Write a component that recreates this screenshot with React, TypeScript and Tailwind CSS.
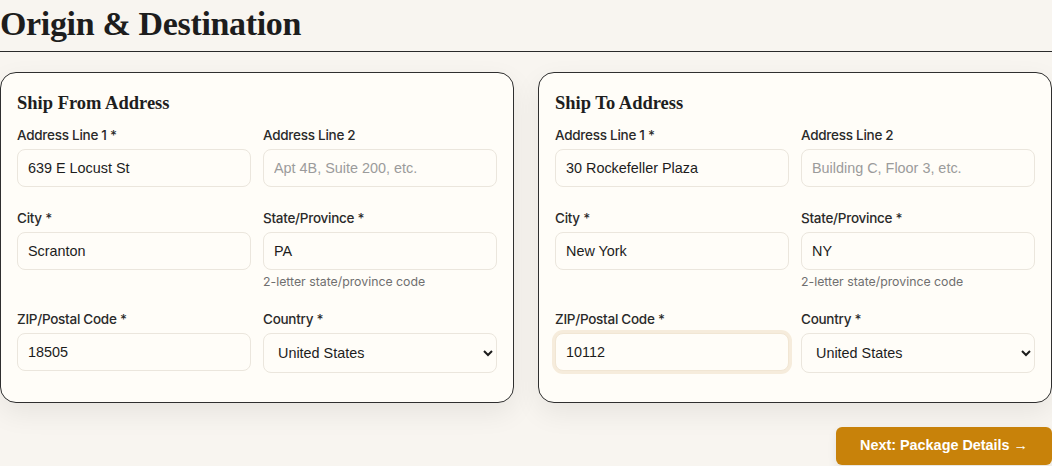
import React from 'react'

interface Address {
  line1: string
  line2: string
  line2Placeholder: string
  city: string
  state: string
  zip: string
  country: string
}

const sans = "font-['Inter','Noto_Sans',sans-serif]"
const serif = "font-['Liberation_Serif','Times_New_Roman',serif]"

const fieldBase =
  "w-full rounded-lg border border-[#ebe6dd] bg-[#fffdf8] px-2.5 font-['Liberation_Sans',Arial,sans-serif] text-[14.4px] text-[#1c1c1c] outline-none placeholder:text-[#9b9b9b]"

function Field({
  label,
  children,
  hint
}: {
  label: string
  children: React.ReactNode
  hint?: string
}) {
  return (
    <div className="flex flex-col">
      <label className={`${sans} mb-1 text-[13.5px] leading-5 font-medium tracking-[-0.02em] text-[#2a2a2a]`}>
        {label}
      </label>
      {children}
      {hint && <p className={`${sans} mt-1 -mb-0.5 text-[12.3px] leading-4 text-[#6f6f6f]`}>{hint}</p>}
    </div>
  )
}

function AddressCard({
  title,
  address,
  focusZip = false
}: {
  title: string
  address: Address
  focusZip?: boolean
}) {
  return (
    <div className="rounded-2xl border border-[#2f2f2f] bg-[#fffdf8] px-4 pt-4 pb-[29px] shadow-[0_10px_28px_rgba(0,0,0,0.07)]">
      <h3 className={`${serif} mb-2 text-[18.5px] leading-7 font-bold text-[#1e1e1e]`}>{title}</h3>
      <div className="grid grid-cols-2 gap-x-3 gap-y-[21px]">
        <Field label="Address Line 1 *">
          <input className={`${fieldBase} h-[38px]`} defaultValue={address.line1} />
        </Field>
        <Field label="Address Line 2">
          <input
            className={`${fieldBase} h-[38px]`}
            defaultValue={address.line2}
            placeholder={address.line2Placeholder}
          />
        </Field>
        <Field label="City *">
          <input className={`${fieldBase} h-[38px]`} defaultValue={address.city} />
        </Field>
        <Field label="State/Province *" hint="2-letter state/province code">
          <input className={`${fieldBase} h-[38px]`} defaultValue={address.state} />
        </Field>
        <Field label="ZIP/Postal Code *">
          <input
            className={`${fieldBase} h-[38px] ${focusZip ? 'border-[#f1e6d4] ring-[3px] ring-[#f6ecdc]' : ''}`}
            defaultValue={address.zip}
          />
        </Field>
        <Field label="Country *">
          <select className={`${fieldBase} h-10`} defaultValue={address.country}>
            <option value="US">United States</option>
            <option value="CA">Canada</option>
            <option value="MX">Mexico</option>
          </select>
        </Field>
      </div>
    </div>
  )
}

const fromAddress: Address = {
  line1: '639 E Locust St',
  line2: '',
  line2Placeholder: 'Apt 4B, Suite 200, etc.',
  city: 'Scranton',
  state: 'PA',
  zip: '18505',
  country: 'US'
}

const toAddress: Address = {
  line1: '30 Rockefeller Plaza',
  line2: '',
  line2Placeholder: 'Building C, Floor 3, etc.',
  city: 'New York',
  state: 'NY',
  zip: '10112',
  country: 'US'
}

export default function App() {
  return (
    <div className="min-h-screen w-full overflow-hidden bg-[#f8f5f0]">
      <h2
        className={`${serif} mb-5 border-b border-[#2a2a2a] pb-[3px] text-[34px] leading-[48px] font-bold tracking-[-0.01em] text-[#1d1d1d]`}
      >
        Origin &amp; Destination
      </h2>

      <div className="grid grid-cols-2 gap-6">
        <AddressCard title="Ship From Address" address={fromAddress} />
        <AddressCard title="Ship To Address" address={toAddress} focusZip />
      </div>

      <div className="mt-6 flex justify-end">
        <button className="h-[38px] rounded-md bg-[#c8820a] px-6 font-['Liberation_Sans',Arial,sans-serif] text-[14.4px] font-bold text-white shadow-[0_4px_10px_rgba(0,0,0,0.08)]">
          Next: Package Details →
        </button>
      </div>
    </div>
  )
}
